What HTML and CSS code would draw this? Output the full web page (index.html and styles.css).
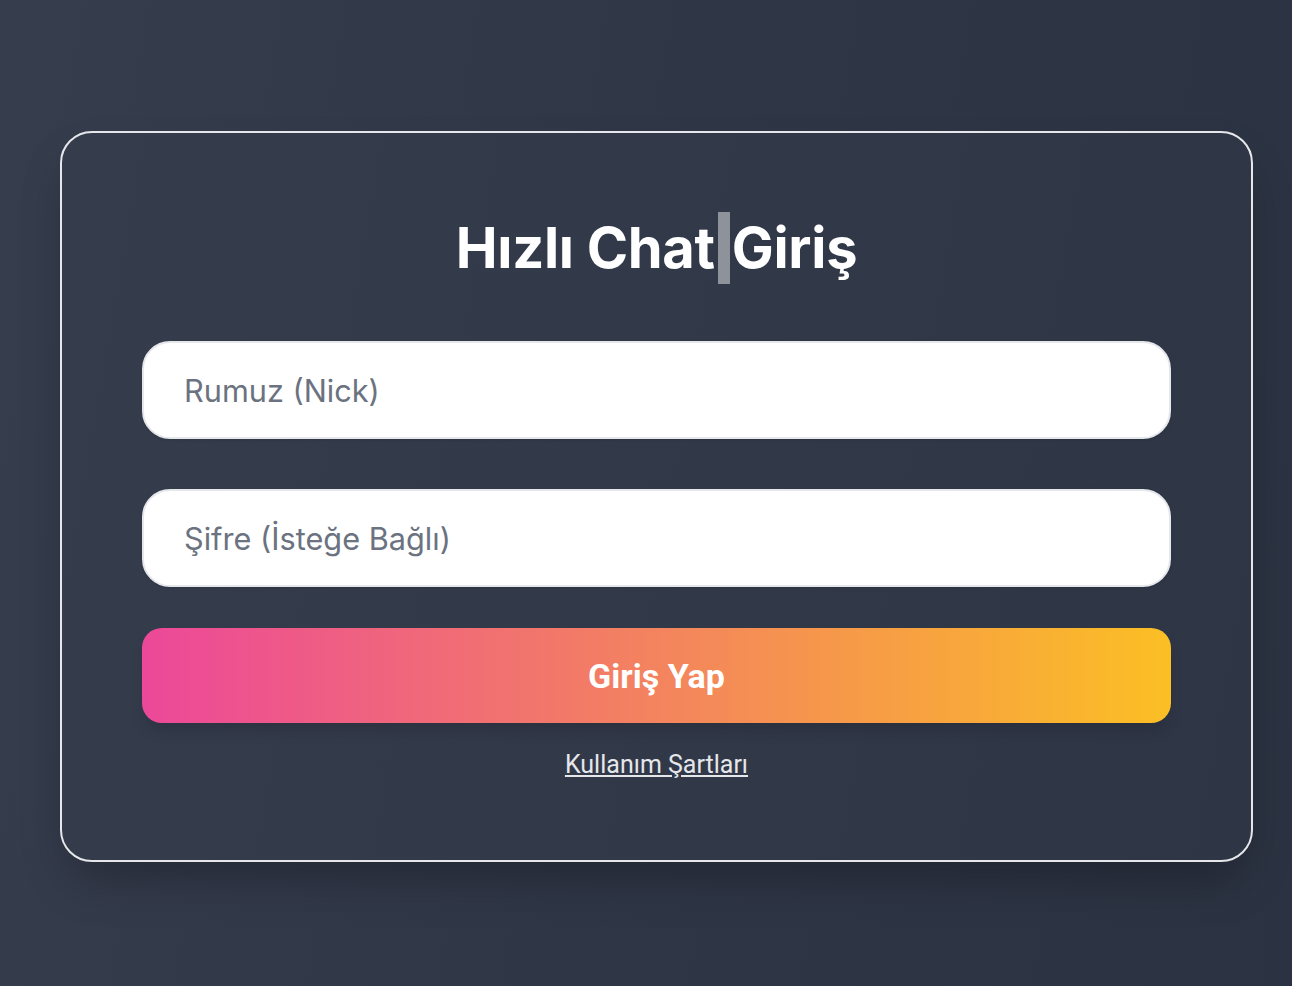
FILE: index.html
```html
<!DOCTYPE html>
<html lang="tr">
<head>
<meta charset="utf-8">
<title>Hızlı Chat Giriş</title>
<link rel="stylesheet" href="styles.css">
</head>
<body>
<main class="page">
  <section class="card">
    <h1 class="title">Hızlı Chat<span class="cursor"></span>Giriş</h1>
    <form class="form">
      <input class="field" type="text" placeholder="Rumuz (Nick)">
      <input class="field" type="password" placeholder="Şifre (İsteğe Bağlı)">
      <button class="submit" type="button">Giriş Yap</button>
      <a class="terms" href="#">Kullanım Şartları</a>
    </form>
  </section>
</main>
</body>
</html>
```

FILE: styles.css
```css
html, body {
  margin: 0;
  padding: 0;
  height: 100%;
}

body {
  background: linear-gradient(100deg, #363d4d 0%, #2f3646 50%, #2b3241 100%);
  font-family: Inter, "Liberation Sans", sans-serif;
}

.page {
  min-height: 100vh;
  display: flex;
  align-items: center;
  padding: 7px 39px 0 60px;
  box-sizing: border-box;
}

.card {
  flex: 1;
  box-sizing: border-box;
  border: 2px solid #e5e7eb;
  border-radius: 32px;
  padding: 79px 80px 80px;
  background: linear-gradient(100deg, #353c4c 0%, #2e3545 100%);
  box-shadow: 0 25px 50px -12px rgba(0, 0, 0, 0.3);
}

.title {
  margin: 0 0 57px;
  text-align: center;
  color: #ffffff;
  font-family: Inter, "Liberation Sans", sans-serif;
  font-weight: 700;
  font-size: 56px;
  line-height: 72px;
  letter-spacing: -0.3px;
}

.cursor {
  display: inline-block;
  width: 12px;
  height: 72px;
  margin: 0 2px 0 3px;
  vertical-align: top;
  background: #8e929a;
}

.form {
  display: flex;
  flex-direction: column;
}

.field {
  box-sizing: border-box;
  height: 98px;
  margin: 0 0 50px;
  padding: 0 40px;
  border: 2px solid #e5e7eb;
  border-radius: 28px;
  background: #ffffff;
  font-family: Inter, "Liberation Sans", sans-serif;
  font-size: 30.7px;
  color: #111827;
  outline: none;
  box-shadow: 0 1px 3px rgba(0, 0, 0, 0.1);
}

.field:nth-of-type(2) {
  margin-bottom: 41px;
}

.field::placeholder {
  color: #6b7280;
}

.submit {
  height: 95px;
  border: none;
  border-radius: 20px;
  background: linear-gradient(to right, #ec4899, #fbbf24);
  color: #ffffff;
  font-family: Roboto, "Liberation Sans", sans-serif;
  font-weight: 700;
  font-size: 34px;
  box-shadow: 0 10px 15px -3px rgba(0, 0, 0, 0.15);
  cursor: pointer;
}

.terms {
  align-self: center;
  margin-top: 27px;
  color: #e5e7eb;
  font-family: Roboto, "Liberation Sans", sans-serif;
  font-size: 25px;
  line-height: 30px;
  text-decoration: underline;
}
```
